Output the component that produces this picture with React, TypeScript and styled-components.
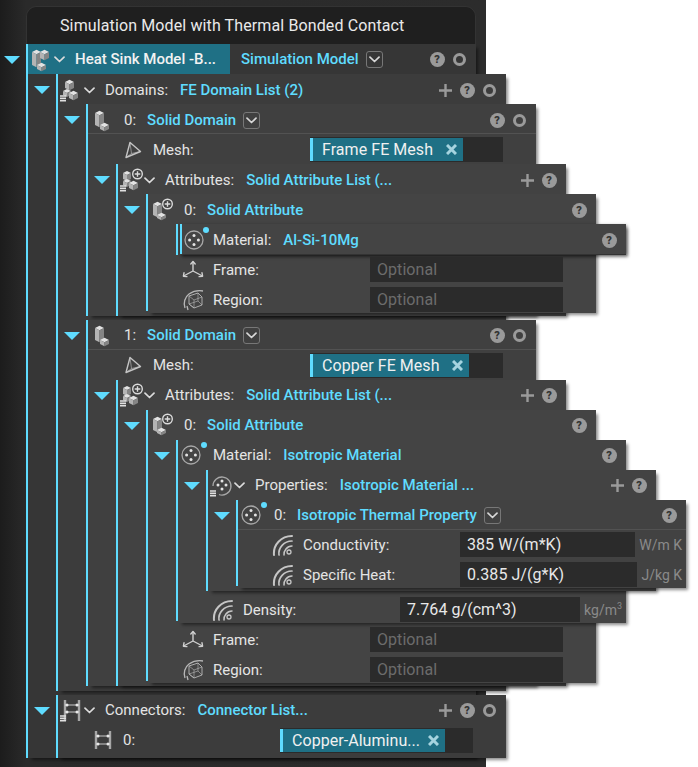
import React from 'react'
import styled, { createGlobalStyle } from 'styled-components'

const Global = createGlobalStyle`
  html, body {
    margin: 0;
    background: #fff;
    font-family: Roboto, "Liberation Sans", sans-serif;
  }
`

const depthColors = ['#363636', '#3c3c3c', '#404040', '#424242', '#444444', '#444444', '#434343', '#424242']

const Tree = styled.div`
  width: 486px;
  height: 767px;
  box-sizing: border-box;
  padding-top: 6px;
  background: linear-gradient(to right, #1c1c1c 0, #2a2a2a 26px, #2c2c2c 100%);
`

const Title = styled.div`
  margin-left: 26px;
  width: 450px;
  height: 38px;
  box-sizing: border-box;
  padding-left: 33px;
  display: flex;
  align-items: center;
  color: #eaeaea;
  font-size: 16px;
  letter-spacing: 0.12px;
  background: #1f1f1f;
  border: 1px solid #333;
  border-bottom: 0;
  border-radius: 10px 10px 0 0;
`

const BranchWrap = styled.div<{ $root?: boolean; $after?: number }>`
  display: grid;
  grid-template-columns: ${p => (p.$root ? '26px' : '28px')} 2px 448px;
  margin-bottom: ${p => p.$after ?? 0}px;
`

const Gutter = styled.div<{ $root?: boolean }>`
  padding-left: ${p => (p.$root ? 4 : 6)}px;
  padding-top: 12px;
`

const Triangle = styled.div`
  width: 0;
  height: 0;
  border-left: 8px solid transparent;
  border-right: 8px solid transparent;
  border-top: 8px solid #5fdcff;
`

const Rail = styled.div<{ $short?: number }>`
  background: #5fdcff;
  margin-bottom: ${p => p.$short ?? 0}px;
`

const Body = styled.div<{ $depth: number; $pad?: number }>`
  width: 448px;
  background: ${p => depthColors[p.$depth]};
  padding-bottom: ${p => p.$pad ?? 0}px;
  box-shadow: 3px 3px 3px -1px rgba(0, 0, 0, 0.45);
`

const Row = styled.div<{ $line?: boolean; $nudge?: boolean }>`
  display: flex;
  align-items: center;
  height: 30px;
  box-sizing: border-box;
  padding-top: ${p => (p.$nudge ? 2 : 0)}px;
  color: #e4e4e4;
  font-size: 15px;
  white-space: nowrap;
  ${p => p.$line && 'box-shadow: inset 0 -1px 0 #525252;'}
`

const MarkedRow = styled(Row)`
  margin-left: 2px;
  border-left: 2px solid #5fdcff;
  margin-bottom: 1px;
  box-shadow: 1px 1px 3px rgba(0, 0, 0, 0.4);
  width: 446px;
`

const TealHead = styled.div`
  display: flex;
  align-items: center;
  width: 202px;
  height: 30px;
  flex: none;
  background: #1f7085;
  color: #f2f2f2;
  font-weight: 500;
  margin-right: 11px;
`

const IconSlot = styled.div<{ $w?: number }>`
  position: relative;
  width: ${p => p.$w ?? 26}px;
  height: 30px;
  flex: none;
  display: flex;
  align-items: center;
  justify-content: center;
`

const Dot = styled.span`
  position: absolute;
  right: -3px;
  top: 2px;
  width: 6px;
  height: 6px;
  border-radius: 50%;
  background: #5fdcff;
`

const ChevronSlot = styled.div`
  width: 21px;
  flex: none;
  display: flex;
  padding-left: 0;
  justify-content: flex-start;
  color: #dcdcdc;
`

const Key = styled.span<{ $lead?: number; $gap?: number }>`
  margin-left: ${p => p.$lead ?? 0}px;
  margin-right: ${p => p.$gap ?? 12}px;
`

const Link = styled.span`
  color: #5fdcff;
  font-weight: 500;
`

const MenuButton = styled.span`
  width: 15px;
  height: 15px;
  margin-left: 7px;
  flex: none;
  display: flex;
  align-items: center;
  justify-content: center;
  border: 1px solid #777;
  border-radius: 3px;
  color: #d8d8d8;
`

const Actions = styled.div`
  margin-left: auto;
  padding-right: 10px;
  display: flex;
  gap: 8px;
  align-items: center;
`

const Action = styled.span`
  width: 14px;
  height: 16px;
  display: flex;
  align-items: center;
  justify-content: center;
`

const Help = styled.span`
  flex: none;
  width: 15px;
  height: 15px;
  border-radius: 50%;
  background: #9a9a9a;
  color: #333;
  font-size: 11px;
  font-weight: 900;
  display: flex;
  align-items: center;
  justify-content: center;
`

const Ring = styled.span`
  flex: none;
  width: 13px;
  height: 13px;
  box-sizing: border-box;
  border-radius: 50%;
  border: 3px solid #9a9a9a;
`

const ValueRow = styled.div<{ $h?: number }>`
  display: grid;
  grid-template-columns: 222px 1fr;
  align-items: start;
  height: ${p => p.$h ?? 30}px;
  padding-right: 33px;
  box-sizing: border-box;
  color: #e4e4e4;
  font-size: 15px;
  white-space: nowrap;
`

const UnitRow = styled(ValueRow)`
  grid-template-columns: 222px 1fr auto;
  padding-right: 4px;
`

const LabelCell = styled.div<{ $nudge?: boolean }>`
  display: flex;
  align-items: center;
  height: 30px;
  box-sizing: border-box;
  padding-left: 32px;
  padding-top: ${p => (p.$nudge ? 2 : 0)}px;
`

const LabelText = styled.span`
  margin-left: 7px;
`

const Field = styled.div<{ $top?: number }>`
  height: 25px;
  margin-top: ${p => p.$top ?? 2}px;
  background: #2b2b2b;
  display: flex;
  align-items: center;
  font-size: 16px;
  letter-spacing: 0.05px;
  color: #e8e8e8;
`

const FieldText = styled.span`
  padding-left: 7px;
`

const Placeholder = styled(FieldText)`
  color: #6c6c6c;
`

const Chip = styled.div<{ $w: number }>`
  width: ${p => p.$w}px;
  height: 23px;
  box-sizing: border-box;
  background: #1f7085;
  border-left: 3px solid #5fdcff;
  padding: 0 6px 0 9px;
  display: flex;
  align-items: center;
  justify-content: space-between;
  color: #f0f0f0;
`

const Unit = styled.span`
  align-self: center;
  margin-left: 4px;
  color: #8a8a8a;
  font-size: 14px;
  sup {
    font-size: 9px;
    line-height: 0;
  }
`

const Chevron = () => (
  <svg width="11" height="7" viewBox="0 0 11 7" fill="none" stroke="currentColor" strokeWidth="1.7" strokeLinecap="round" strokeLinejoin="round">
    <path d="M1 1.2l4.5 4.3L10 1.2" />
  </svg>
)

const Plus = () => (
  <svg width="13" height="13" viewBox="0 0 13 13" stroke="#9a9a9a" strokeWidth="2.4">
    <path d="M6.5 0v13M0 6.5h13" />
  </svg>
)

const Cross = () => (
  <svg width="11" height="11" viewBox="0 0 11 11" stroke="#a5d3df" strokeWidth="3">
    <path d="M1 1l9 9M10 1l-9 9" />
  </svg>
)

const Cube = ({ x, y, s, h = s }: { x: number; y: number; s: number; h?: number }) => {
  const d = s / 2
  return (
    <g>
      <path d={`M${x} ${y}l${s} ${-d}l${s} ${d}l${-s} ${d}z`} fill="#e2e2e2" />
      <path d={`M${x} ${y}l${s} ${d}v${h}l${-s} ${-d}z`} fill="#b4b4b4" />
      <path d={`M${x + 2 * s} ${y}l${-s} ${d}v${h}l${s} ${-d}z`} fill="#858585" />
    </g>
  )
}

const ListMarks = () => (
  <path d="M1 18h6M1 20.4h6M1 22.8h6" stroke="#e0e0e0" strokeWidth="1.6" />
)

const PlusBadge = () => (
  <g>
    <circle cx="18.5" cy="6" r="4.8" fill="#3f3f3f" stroke="#dcdcdc" strokeWidth="1.4" />
    <path d="M18.5 3.2v5.6M15.7 6h5.6" stroke="#dcdcdc" strokeWidth="1.4" />
  </g>
)

const SolidIcon = () => (
  <svg width="24" height="24" viewBox="0 0 24 24">
    <Cube x={6} y={5} s={4.5} h={12} />
    <Cube x={11} y={17} s={4.5} h={4} />
  </svg>
)

const ModelIcon = () => (
  <svg width="24" height="26" viewBox="0 0 24 26">
    <Cube x={3} y={6} s={4.5} h={13} />
    <Cube x={11} y={6} s={4.5} h={6} />
    <Cube x={8} y={19} s={4.5} h={4} />
  </svg>
)

const DomainsIcon = () => (
  <svg width="24" height="24" viewBox="0 0 24 24">
    <Cube x={6} y={4} s={4.5} h={6} />
    <Cube x={4} y={13} s={4} h={4} />
    <Cube x={10} y={15} s={4.5} h={5} />
    <ListMarks />
  </svg>
)

const AttrListIcon = () => (
  <svg width="24" height="24" viewBox="0 0 24 24">
    <Cube x={4} y={5} s={4} h={6} />
    <Cube x={4} y={13} s={4} h={4} />
    <Cube x={10} y={15} s={4.5} h={5} />
    <ListMarks />
    <PlusBadge />
  </svg>
)

const AttrIcon = () => (
  <svg width="24" height="24" viewBox="0 0 24 24">
    <Cube x={4} y={6} s={4.5} h={11} />
    <Cube x={8} y={17} s={4.5} h={3} />
    <PlusBadge />
  </svg>
)

const MeshIcon = () => (
  <svg width="18" height="18" viewBox="0 0 18 18" fill="none" stroke="#c4c4c4" strokeWidth="1.4" strokeLinejoin="round">
    <path d="M6 1.5L16.5 10.5L2 16.5z" />
    <path d="M6 1.5L7.5 12.5L2 16.5M7.5 12.5L16.5 10.5" strokeWidth="0.6" />
  </svg>
)

const FrameIcon = () => (
  <svg width="22" height="20" viewBox="0 0 22 20" fill="none" stroke="#d0d0d0" strokeWidth="1.4" strokeLinejoin="round" strokeLinecap="round">
    <path d="M11 11V2M11 11L2.5 15.5M11 11l8.5 4.5" />
    <path d="M8.8 4L11 1.5 13.2 4M2 12.8l-.6 3.4 3.5.4M20 12.8l.6 3.4-3.5.4" />
  </svg>
)

const RegionIcon = () => (
  <svg width="22" height="22" viewBox="0 0 22 22" fill="none" stroke="#b8b8b8" strokeWidth="0.9">
    <path d="M7 7l9-3 4 4v8l-8 3-5-4z" />
    <path d="M7 7l5 4v8M12 11l8-3M16 4v8l-9 3M16 12l4 4M7 15l5 4" strokeWidth="0.6" />
    <path d="M3 19c-2-5 0-11 4-14 3-2 8-4 14-3" strokeWidth="1.3" />
    <path d="M6 21l-1-4" strokeWidth="1.3" />
  </svg>
)

const MaterialIcon = () => (
  <svg width="20" height="20" viewBox="0 0 20 20" fill="#e4e4e4">
    <circle cx="10" cy="10" r="9" fill="none" stroke="#a8a8a8" strokeWidth="1.3" />
    <circle cx="10" cy="5.6" r="1.5" />
    <circle cx="10" cy="14.4" r="1.5" />
    <circle cx="5.6" cy="10" r="1.5" />
    <circle cx="14.4" cy="10" r="1.5" />
  </svg>
)

const PropsIcon = () => (
  <svg width="24" height="24" viewBox="0 0 24 24" fill="#e4e4e4">
    <path d="M4 13a9 9 0 1 1 6 8.5" fill="none" stroke="#a8a8a8" strokeWidth="1.3" />
    <circle cx="13" cy="8" r="1.5" />
    <circle cx="13" cy="16" r="1.5" />
    <circle cx="9" cy="12" r="1.5" />
    <circle cx="17" cy="12" r="1.5" />
    <ListMarks />
  </svg>
)

const WaveIcon = () => (
  <svg width="22" height="22" viewBox="0 0 22 22" fill="none" stroke="#c6c6c6" strokeLinecap="round">
    <path d="M2 21C1 11 9 2 20 2" strokeWidth="2" />
    <path d="M7 21C6 14 12 7 20 7" strokeWidth="1.7" />
    <path d="M12 21c-.5-4 3-9 8-9" strokeWidth="1.5" />
    <circle cx="17" cy="18" r="2" strokeWidth="1.3" />
  </svg>
)

const Ladder = ({ l, r, t, b, y1, y2 }: { l: number; r: number; t: number; b: number; y1: number; y2: number }) => (
  <g fill="#e8e8e8">
    <path d={`M${l} ${t}V${b}M${r} ${t}V${b}`} stroke="#a6a6a6" strokeWidth="2.4" />
    <path d={`M${l} ${y1}H${r}M${l} ${y2}H${r}`} stroke="#c8c8c8" strokeWidth="1.2" />
    <circle cx={l + 2} cy={y1} r="1.5" />
    <circle cx={r - 2} cy={y1} r="1.5" />
    <circle cx={l + 2} cy={y2} r="1.5" />
    <circle cx={r - 2} cy={y2} r="1.5" />
  </g>
)

const ConnectorListIcon = () => (
  <svg width="24" height="24" viewBox="0 0 24 24">
    <Ladder l={6} r={20} t={2} b={23} y1={7} y2={14} />
    <ListMarks />
  </svg>
)

const ConnectorIcon = () => (
  <svg width="18" height="20" viewBox="0 0 18 20">
    <Ladder l={2} r={16} t={1} b={19} y1={6} y2={14} />
  </svg>
)

interface BranchProps {
  depth: number
  root?: boolean
  open?: boolean
  pad?: number
  short?: number
  after?: number
  children: React.ReactNode
}

const Branch = ({ depth, root, open = true, pad, short, after, children }: BranchProps) => (
  <BranchWrap $root={root} $after={after}>
    <Gutter $root={root}>{open && <Triangle />}</Gutter>
    <Rail $short={short} />
    <Body $depth={depth} $pad={pad}>{children}</Body>
  </BranchWrap>
)

const Tools = ({ add, ring }: { add?: boolean; ring?: boolean }) => (
  <Actions>
    {add && <Action><Plus /></Action>}
    <Action><Help>?</Help></Action>
    {ring && <Action><Ring /></Action>}
  </Actions>
)

const ListHead = ({ icon, name, link, ring, nudge }: { icon: React.ReactNode; name: string; link: string; ring?: boolean; nudge?: boolean }) => (
  <Row $nudge={nudge}>
    <IconSlot>{icon}</IconSlot>
    <ChevronSlot><Chevron /></ChevronSlot>
    <Key>{name}</Key>
    <Link>{link}</Link>
    <Tools add ring={ring} />
  </Row>
)

const ItemHead = ({ icon, name, link, menu, ring, line, dot, nudge, lead = 10, gap = 11 }: { icon: React.ReactNode; name: string; link: string; menu?: boolean; ring?: boolean; line?: boolean; dot?: boolean; nudge?: boolean; lead?: number; gap?: number }) => (
  <Row $line={line} $nudge={nudge}>
    <IconSlot>{icon}{dot && <Dot />}</IconSlot>
    <Key $lead={lead} $gap={gap}>{name}</Key>
    <Link>{link}</Link>
    {menu && <MenuButton><Chevron /></MenuButton>}
    <Tools ring={ring} />
  </Row>
)

const Labeled = ({ icon, label, nudge }: { icon: React.ReactNode; label: string; nudge?: boolean }) => (
  <LabelCell $nudge={nudge}>
    <IconSlot>{icon}</IconSlot>
    <LabelText>{label}</LabelText>
  </LabelCell>
)

const OptionalRow = ({ icon, label, h }: { icon: React.ReactNode; label: string; h?: number }) => (
  <ValueRow $h={h}>
    <Labeled icon={icon} label={label} />
    <Field><Placeholder>Optional</Placeholder></Field>
  </ValueRow>
)

const ChipRow = ({ icon, label, chip, w, nudge }: { icon: React.ReactNode; label: string; chip: string; w: number; nudge?: boolean }) => (
  <ValueRow>
    <Labeled icon={icon} label={label} nudge={nudge} />
    <Field $top={3}>
      <Chip $w={w}>{chip}<Cross /></Chip>
    </Field>
  </ValueRow>
)

const UnitValue = ({ label, value, unit, h }: { label: string; value: string; unit: React.ReactNode; h?: number }) => (
  <UnitRow $h={h}>
    <Labeled icon={<WaveIcon />} label={label} />
    <Field><FieldText>{value}</FieldText></Field>
    <Unit>{unit}</Unit>
  </UnitRow>
)

export default function App() {
  return (
    <>
      <Global />
      <Tree>
        <Title>Simulation Model with Thermal Bonded Contact</Title>
        <Branch root depth={0}>
          <Row>
            <TealHead>
              <IconSlot><ModelIcon /></IconSlot>
              <ChevronSlot><Chevron /></ChevronSlot>
              Heat Sink Model -B...
            </TealHead>
            <Link>Simulation Model</Link>
            <MenuButton><Chevron /></MenuButton>
            <Tools ring />
          </Row>

          <Branch depth={1} pad={5} after={4}>
            <ListHead icon={<DomainsIcon />} name="Domains:" link="FE Domain List (2)" ring nudge />

            <Branch depth={2} after={4}>
              <ItemHead icon={<SolidIcon />} name="0:" link="Solid Domain" menu ring line nudge />
              <ChipRow icon={<MeshIcon />} label="Mesh:" chip="Frame FE Mesh" w={153} nudge />
              <Branch depth={3} pad={3}>
                <ListHead icon={<AttrListIcon />} name="Attributes:" link="Solid Attribute List (..." nudge />
                <Branch depth={4} short={2}>
                  <ItemHead icon={<AttrIcon />} name="0:" link="Solid Attribute" nudge />
                  <Branch depth={5} open={false}>
                    <MarkedRow $nudge>
                      <IconSlot $w={24}><MaterialIcon /><Dot /></IconSlot>
                      <Key $lead={7}>Material:</Key>
                      <Link>Al-Si-10Mg</Link>
                      <Tools />
                    </MarkedRow>
                  </Branch>
                  <OptionalRow icon={<FrameIcon />} label="Frame:" />
                  <OptionalRow icon={<RegionIcon />} label="Region:" h={28} />
                </Branch>
              </Branch>
            </Branch>

            <Branch depth={2}>
              <ItemHead icon={<SolidIcon />} name="1:" link="Solid Domain" menu ring line />
              <ChipRow icon={<MeshIcon />} label="Mesh:" chip="Copper FE Mesh" w={159} />
              <Branch depth={3} pad={3}>
                <ListHead icon={<AttrListIcon />} name="Attributes:" link="Solid Attribute List (..." />
                <Branch depth={4} short={2}>
                  <ItemHead icon={<AttrIcon />} name="0:" link="Solid Attribute" />
                  <Branch depth={5} short={2} after={2}>
                    <ItemHead icon={<MaterialIcon />} name="Material:" link="Isotropic Material" lead={9} gap={12} dot />
                    <Branch depth={6} pad={3} after={4}>
                      <ListHead icon={<PropsIcon />} name="Properties:" link="Isotropic Material ..." />
                      <Branch depth={7} short={2}>
                        <ItemHead icon={<MaterialIcon />} name="0:" link="Isotropic Thermal Property" menu line dot />
                        <UnitValue label="Conductivity:" value="385 W/(m*K)" unit="W/m K" />
                        <UnitValue label="Specific Heat:" value="0.385 J/(g*K)" unit="J/kg K" h={28} />
                      </Branch>
                    </Branch>
                    <UnitValue label="Density:" value="7.764 g/(cm^3)" unit={<>kg/m<sup>3</sup></>} h={28} />
                  </Branch>
                  <OptionalRow icon={<FrameIcon />} label="Frame:" />
                  <OptionalRow icon={<RegionIcon />} label="Region:" h={28} />
                </Branch>
              </Branch>
            </Branch>
          </Branch>

          <Branch depth={1} pad={3}>
            <ListHead icon={<ConnectorListIcon />} name="Connectors:" link="Connector List..." ring />
            <ChipRow icon={<ConnectorIcon />} label="0:" chip="Copper-Aluminu..." w={165} />
          </Branch>
        </Branch>
      </Tree>
    </>
  )
}
